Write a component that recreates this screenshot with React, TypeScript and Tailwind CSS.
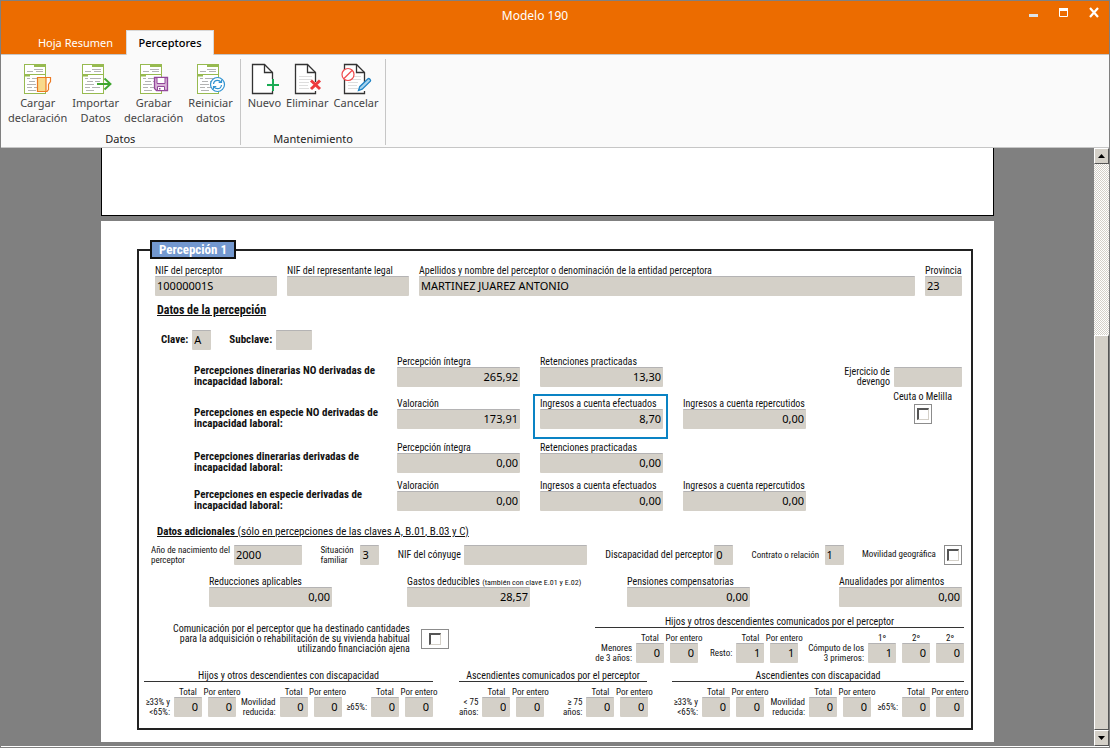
import type { ReactNode } from "react";
import clsx from "clsx";

const box = "block h-5 bg-[#d4d0c8] border-t border-[#b4b3b4] rounded-[1px] pl-0.5 pb-0.5 font-['Noto_Sans',sans-serif] text-[11px] leading-[17px] font-normal text-black outline-none";

type FieldProps = {
  label: ReactNode;
  value?: string;
  className?: string;
  align?: "left" | "right";
  highlight?: boolean;
};

// Label on top of the box
function Field({ label, value = "", className, align = "left", highlight }: FieldProps) {
  return (
    <label className={clsx("relative block", className)}>
      <span className="block h-3 leading-[14px] whitespace-nowrap">{label}</span>
      <input readOnly value={value} className={clsx(box, "w-full pr-0.5", align === "right" && "text-right")} />
      {highlight && <span className="absolute -left-[7px] -right-[5px] -top-[3px] -bottom-[10px] border-2 border-[#0a83c4]" />}
    </label>
  );
}

// Label on the left of the box
function InlineField({ label, value = "", className, width }: { label: ReactNode; value?: string; className?: string; width: string }) {
  return (
    <label className={clsx("flex items-center justify-between whitespace-nowrap", className)}>
      <span className="leading-[10px]">{label}</span>
      <input readOnly value={value} className={clsx(box, "shrink-0", width)} />
    </label>
  );
}

function Check({ className }: { className?: string }) {
  return (
    <span className={clsx("flex h-5 items-center justify-center border border-[#8c8c8c] bg-white", className)}>
      <input
        type="checkbox"
        className="block size-3 appearance-none border border-t-2 border-l-2 border-[#d4d0c8] border-t-[#555] border-l-[#555] bg-white"
      />
    </span>
  );
}

type Cell = { head: string; value: string };

const totals = (a: string, b: string): Cell[] => [
  { head: "Total", value: a },
  { head: "Por entero", value: b },
];

function Cells({ label, cells, className }: { label: ReactNode; cells: Cell[]; className?: string }) {
  return (
    <div className={clsx("flex items-end justify-between text-[9px] leading-[10px]", className)}>
      <span className="flex h-5 flex-1 items-center justify-end pr-1 text-right whitespace-nowrap">{label}</span>
      <div className="flex gap-1.5">
        {cells.map((c, i) => (
          <label key={i} className="flex w-7 flex-col items-center whitespace-nowrap">
            <span>{c.head}</span>
            <input readOnly value={c.value} className={clsx(box, "w-full pr-1 text-right")} />
          </label>
        ))}
      </div>
    </div>
  );
}

function Block({ title, className, children }: { title: string; className?: string; children: ReactNode }) {
  return (
    <section className={className}>
      <h3 className="border-b border-[#333] text-center leading-[11px]">{title}</h3>
      <div className="flex justify-between pt-[5px]">{children}</div>
    </section>
  );
}

/* ---------- ribbon icons ---------- */

function Icon({ children }: { children: ReactNode }) {
  return (
    <svg width="28" height="30" viewBox="0 0 28 30" fill="none" className="overflow-visible" aria-hidden="true">
      {children}
    </svg>
  );
}

function Sheet() {
  return (
    <>
      <rect x="0.5" y="0.5" width="21" height="29" fill="#fff" stroke="#97ba50" />
      <path d="M10 0h12v3H10zM0 10h22v1H0zM0 11h6v1.5H0z" fill="#97ba50" />
      <path
        d="M10 5.5h9M3 7.5h6M12 7.5h7M8 14.5h11M3 14.5h3M5 17.5h6M13 17.5h5M3 20.5h9M15 20.5h4M3 23.5h5M10 23.5h8M4 26.5h8"
        stroke="#b3b3b3"
      />
    </>
  );
}

function Page({ lines }: { lines?: boolean }) {
  return (
    <>
      <path d="M22.5 18V8.5l-8-8h-12v29h20V27" fill="#fff" stroke="#333" strokeWidth="1.3" />
      <path d="M14.5 .5v8h8" stroke="#333" strokeWidth="1.3" />
      {lines && <path d="M6 12.5h13M6 15.5h13M6 18.5h10M6 21.5h9M6 24.5h10" stroke="#dedede" />}
    </>
  );
}

const dataButtons = [
  {
    lines: ["Cargar", "declaración"],
    icon: (
      <Icon>
        <Sheet />
        <path d="M22 13.5h4.500v4l-2 3v5l-1.500 2h-9" stroke="#ec7a23" strokeWidth="1.200" fill="#fff" />
        <path d="M13.500 13.500h8.500v14h-8.500z" fill="#f8d98b" stroke="#ec7a23" strokeWidth="1.200" />
      </Icon>
    ),
  },
  {
    lines: ["Importar", "Datos"],
    icon: (
      <Icon>
        <Sheet />
        <path d="M15 20h13M22.500 14.500L28.500 20l-6 5.500" stroke="#3fa52f" strokeWidth="1.900" />
      </Icon>
    ),
  },
  {
    lines: ["Grabar", "declaración"],
    icon: (
      <Icon>
        <Sheet />
        <path d="M14.500 13.500h13v13h-11l-2-2z" fill="#d9b3d8" stroke="#93479a" strokeWidth="1.300" />
        <path d="M17 13.500h8v6h-8zM17.500 22.500h7v4h-7z" fill="#fff" stroke="#93479a" />
        <path d="M19 24h1.500v1.500H19z" fill="#93479a" />
      </Icon>
    ),
  },
  {
    lines: ["Reiniciar", "datos"],
    icon: (
      <Icon>
        <Sheet />
        <circle cx="20.500" cy="20.500" r="7" fill="#fff" stroke="#3093d1" strokeWidth="1.200" />
        <path
          d="M16.500 20c.3-2.200 2-3.700 4-3.700 1.400 0 2.700.8 3.400 1.900M24.500 21c-.3 2.200-2 3.700-4 3.700-1.400 0-2.700-.8-3.400-1.900M24.500 15.800v2.700h-2.800M16.500 25.200v-2.700h2.800"
          stroke="#3093d1"
          strokeWidth="1.200"
        />
      </Icon>
    ),
  },
];

const editButtons = [
  {
    lines: ["Nuevo"],
    icon: (
      <Icon>
        <Page />
        <path d="M23 15v12M17 21h12" stroke="#fafafa" strokeWidth="4" />
        <path d="M23 15v12M17 21h12" stroke="#1aab54" strokeWidth="2" />
      </Icon>
    ),
  },
  {
    lines: ["Eliminar"],
    icon: (
      <Icon>
        <Page lines />
        <path d="M18 16.500l9 8.500M27 16.500l-9 8.500" stroke="#ee3a3c" strokeWidth="3" />
      </Icon>
    ),
  },
  {
    lines: ["Cancelar"],
    icon: (
      <Icon>
        <Page lines />
        <circle cx="6" cy="10.500" r="6" fill="#fff" stroke="#f04b4e" strokeWidth="1.200" />
        <path d="M2 14.500l8-8" stroke="#f04b4e" strokeWidth="1.200" />
        <path d="M16.500 26.500l1.200-3.800 8.300-8c1-.8 3.300 1.200 2.400 2.500l-8.200 8z" fill="#a8d4ef" stroke="#1f83c4" strokeWidth="1.300" />
      </Icon>
    ),
  },
];

type RibbonButton = { lines: string[]; icon: ReactNode };

function RibbonGroup({ title, buttons }: { title: string; buttons: RibbonButton[] }) {
  return (
    <div className="mt-1 mb-0.5 flex flex-col border-r border-[#c6c6c6] px-[7px] pt-[5px]">
      <div className="flex h-[62px] items-start gap-[5px]">
        {buttons.map((b, i) => (
          <button key={i} type="button" className="flex flex-col items-center gap-px leading-[15px] text-[#444]">
            {b.icon}
            <span>
              {b.lines.map((l) => (
                <span key={l} className="block">{l}</span>
              ))}
            </span>
          </button>
        ))}
      </div>
      <div className="mt-[7px] text-center leading-3 text-[#222]">{title}</div>
    </div>
  );
}

/* ---------- form rows ---------- */

const perceptionRows = [
  { gap: "", title: "Percepciones dinerarias NO derivadas de", fields: [["Percepción íntegra", "265,92"], ["Retenciones practicadas", "13,30"]] },
  { gap: "mt-2.5", title: "Percepciones en especie NO derivadas de", fields: [["Valoración", "173,91"], ["Ingresos a cuenta efectuados", "8,70"], ["Ingresos a cuenta repercutidos", "0,00"]] },
  { gap: "mt-3", title: "Percepciones dinerarias derivadas de", fields: [["Percepción íntegra", "0,00"], ["Retenciones practicadas", "0,00"]] },
  { gap: "mt-1.5", title: "Percepciones en especie derivadas de", fields: [["Valoración", "0,00"], ["Ingresos a cuenta efectuados", "0,00"], ["Ingresos a cuenta repercutidos", "0,00"]] },
];

function DisabilityBlock({ title, className }: { title: string; className: string }) {
  return (
    <Block title={title} className={className}>
      <Cells className="w-[92px]" label={<>≥33% y<br />&lt;65%:</>} cells={totals("0", "0")} />
      <Cells className="w-[99px]" label={<>Movilidad<br />reducida:</>} cells={totals("0", "0")} />
      <Cells className="w-[88px]" label="≥65%:" cells={totals("0", "0")} />
    </Block>
  );
}

function Perception() {
  return (
    <div className="relative border-2 border-[#222] pt-[13px] pb-[11px] font-['Roboto_Condensed','Roboto',sans-serif] text-[10px] text-[#111]">
      <h2 className="absolute -top-[11px] left-[11px] border-2 border-[#111] bg-[#7398cf] px-[7px] text-[13px] leading-[15px] font-bold text-white">
        Percepción 1
      </h2>

      <div className="pr-[9px] pl-4">
        <div className="flex gap-2.5">
          <Field label="NIF del perceptor" value="10000001S" className="w-[122px]" />
          <Field label="NIF del representante legal" className="w-[122px]" />
          <Field label="Apellidos y nombre del perceptor o denominación de la entidad perceptora" value="MARTINEZ JUAREZ ANTONIO" className="flex-1" />
          <Field label="Provincia" value="23" className="w-[37px]" />
        </div>

        <h3 className="mt-[7px] pl-0.5 text-xs leading-[14px] font-bold underline">Datos de la percepción</h3>

        <div className="mt-[13px] flex gap-[18px] pl-1.5 text-[11px] font-bold">
          <InlineField label="Clave:" value="A" width="w-[19px]" className="gap-1" />
          <InlineField label="Subclave:" width="w-9" className="gap-1" />
        </div>

        <div className="mt-[5px] flex items-start justify-between">
          <div>
            {perceptionRows.map((row) => (
              <div key={row.title} className={clsx("flex items-end", row.gap)}>
                <div className="w-[242px] pl-[39px] text-[11px] leading-[11px] font-bold whitespace-nowrap">
                  {row.title}
                  <br />
                  incapacidad laboral:
                </div>
                <div className="flex gap-5">
                  {row.fields.map(([label, value]) => (
                    <Field key={label} label={label} value={value} align="right" className="w-[123px]" highlight={value === "8,70"} />
                  ))}
                </div>
              </div>
            ))}
          </div>
          <div className="flex flex-col items-end pt-3">
            <InlineField label={<span className="block text-right">Ejercicio de<br />devengo</span>} width="w-[68px]" className="gap-1" />
            <label className="mt-1 mr-2.5 flex flex-col items-center leading-3">
              Ceuta o Melilla
              <Check className="mt-px w-[18px]" />
            </label>
          </div>
        </div>

        <h3 className="mt-3.5 pl-0.5 text-[11px] leading-[14px] underline">
          <b>Datos adicionales</b> (sólo en percepciones de las claves A, B.01, B.03 y C)
        </h3>

        <div className="-ml-1 mt-1.5 flex justify-between">
          <InlineField label={<>Año de nacimiento del<br />perceptor</>} value="2000" width="w-[68px]" className="w-[151px] text-[9px]" />
          <InlineField label={<>Situación<br />familiar</>} value="3" width="w-[19px]" className="w-[59px] text-[9px]" />
          <InlineField label="NIF del cónyuge" width="w-[123px]" className="w-[189px]" />
          <InlineField label="Discapacidad del perceptor" value="0" width="w-[19px]" className="w-32" />
          <InlineField label="Contrato o relación" value="1" width="w-[19px]" className="w-[92px] text-[9px]" />
          <label className="flex w-[100px] items-center justify-between text-[9px] whitespace-nowrap">
            Movilidad geográfica
            <Check className="w-[18px]" />
          </label>
        </div>

        <div className="mt-2.5 flex pl-[54px]">
          <Field label="Reducciones aplicables" value="0,00" align="right" className="w-[123px]" />
          <Field
            label={<>Gastos deducibles <small className="text-[8px]">(también con clave E.01 y E.02)</small></>}
            value="28,57"
            align="right"
            className="ml-[75px] w-[123px]"
          />
          <Field label="Pensiones compensatorias" value="0,00" align="right" className="ml-[97px] w-[123px]" />
          <Field label="Anualidades por alimentos" value="0,00" align="right" className="ml-auto w-[123px]" />
        </div>
      </div>

      <div className="pr-[7px] pl-[5px]">
        <div className="mt-[9px] flex items-start justify-between">
          <label className="flex items-center gap-[11px] pt-2 pl-[29px] text-right leading-[10px]">
            <span>
              Comunicación por el perceptor que ha destinado cantidades
              <br />
              para la adquisición o rehabilitación de su vivienda habitual
              <br />
              utilizando financiación ajena
            </span>
            <Check className="w-7" />
          </label>
          <Block title="Hijos y otros descendientes comunicados por el perceptor" className="w-[369px]">
            <Cells className="w-[103px]" label={<>Menores<br />de 3 años:</>} cells={totals("0", "0")} />
            <Cells className="w-[86px]" label="Resto:" cells={totals("1", "1")} />
            <Cells
              className="w-[156px]"
              label={<>Cómputo de los<br />3 primeros:</>}
              cells={[{ head: "1º", value: "1" }, { head: "2º", value: "0" }, { head: "2º", value: "0" }]}
            />
          </Block>
        </div>

        <div className="mt-[7px] flex">
          <DisabilityBlock title="Hijos y otros descendientes con discapacidad" className="w-[289px]" />
          <Block title="Ascendientes comunicados por el perceptor" className="ml-[26px] w-[188px]">
            <Cells className="w-[82px]" label={<>&lt; 75<br />años:</>} cells={totals("0", "0")} />
            <Cells className="w-[84px]" label={<>≥ 75<br />años:</>} cells={totals("0", "0")} />
          </Block>
          <DisabilityBlock title="Ascendientes con discapacidad" className="ml-auto w-[292px]" />
        </div>
      </div>
    </div>
  );
}

const bevel = "border border-white border-r-[#555] border-b-[#555] bg-[#d4d0c8]";

function ScrollBar() {
  return (
    <div className="flex w-[15px] shrink-0 flex-col bg-[conic-gradient(#fff_25%,#d4d0c8_0_50%,#fff_0_75%,#d4d0c8_0)] bg-[length:2px_2px]">
      <button type="button" aria-label="Subir" className={clsx("flex h-4 items-center justify-center", bevel)}>
        <svg width="7" height="4" viewBox="0 0 7 4" aria-hidden="true"><path d="M3.500 0L7 4H0z" /></svg>
      </button>
      <div className="flex-[171]" />
      <div className={clsx("flex-[394]", bevel)} />
      <button type="button" aria-label="Bajar" className={clsx("flex h-4 items-center justify-center", bevel)}>
        <svg width="7" height="4" viewBox="0 0 7 4" aria-hidden="true"><path d="M0 0h7L3.500 4z" /></svg>
      </button>
    </div>
  );
}

export default function App() {
  return (
    <div className="flex h-screen flex-col border border-[#808080] bg-[#fafafa] font-['Noto_Sans',sans-serif] text-[11px]">
      <header className="relative flex h-[54px] shrink-0 flex-col justify-between border-b border-[#c6c6c6] bg-[#ec6c00] text-white">
        <h1 className="pt-1.5 pr-10 text-center text-xs leading-[18px]">Modelo 190</h1>
        <div className="absolute top-1.5 right-2.5 flex gap-5">
          <button type="button" aria-label="Minimizar">
            <svg width="10" height="12" viewBox="0 0 10 12" aria-hidden="true"><path d="M0 7h9v3H0z" fill="#dde3e8" /></svg>
          </button>
          <button type="button" aria-label="Maximizar">
            <svg width="10" height="12" viewBox="0 0 10 12" fill="none" aria-hidden="true">
              <path d="M.5 1.500h8v8h-8z" stroke="#fff" />
              <path d="M0 1h9v3H0z" fill="#fff" />
            </svg>
          </button>
          <button type="button" aria-label="Cerrar">
            <svg width="10" height="12" viewBox="0 0 10 12" fill="none" aria-hidden="true">
              <path d="M1 1l8 9M9 1l-8 9" stroke="#fff" strokeWidth="2.200" />
            </svg>
          </button>
        </div>
        <nav className="-mb-px flex items-end pl-6">
          <button type="button" className="h-[25px] w-[101px] pt-px">Hoja Resumen</button>
          <button type="button" className="h-[25px] w-[88px] border border-b-0 border-[#d8d8d8] bg-[#fafafa] font-medium text-black">
            Perceptores
          </button>
        </nav>
      </header>

      <div className="flex shrink-0 border-b border-[#c6c6c6]">
        <RibbonGroup title="Datos" buttons={dataButtons} />
        <RibbonGroup title="Mantenimiento" buttons={editButtons} />
      </div>

      <div className="flex min-h-0 flex-1 border-b border-white">
        <main className="min-w-0 flex-1 overflow-hidden bg-[#808080] px-[100px]">
          <div className="h-[68px] border border-t-0 border-black bg-white" />
          <div className="mt-[5px] bg-white pt-7 pr-[21px] pb-3 pl-9">
            <Perception />
          </div>
        </main>
        <ScrollBar />
      </div>
    </div>
  );
}
